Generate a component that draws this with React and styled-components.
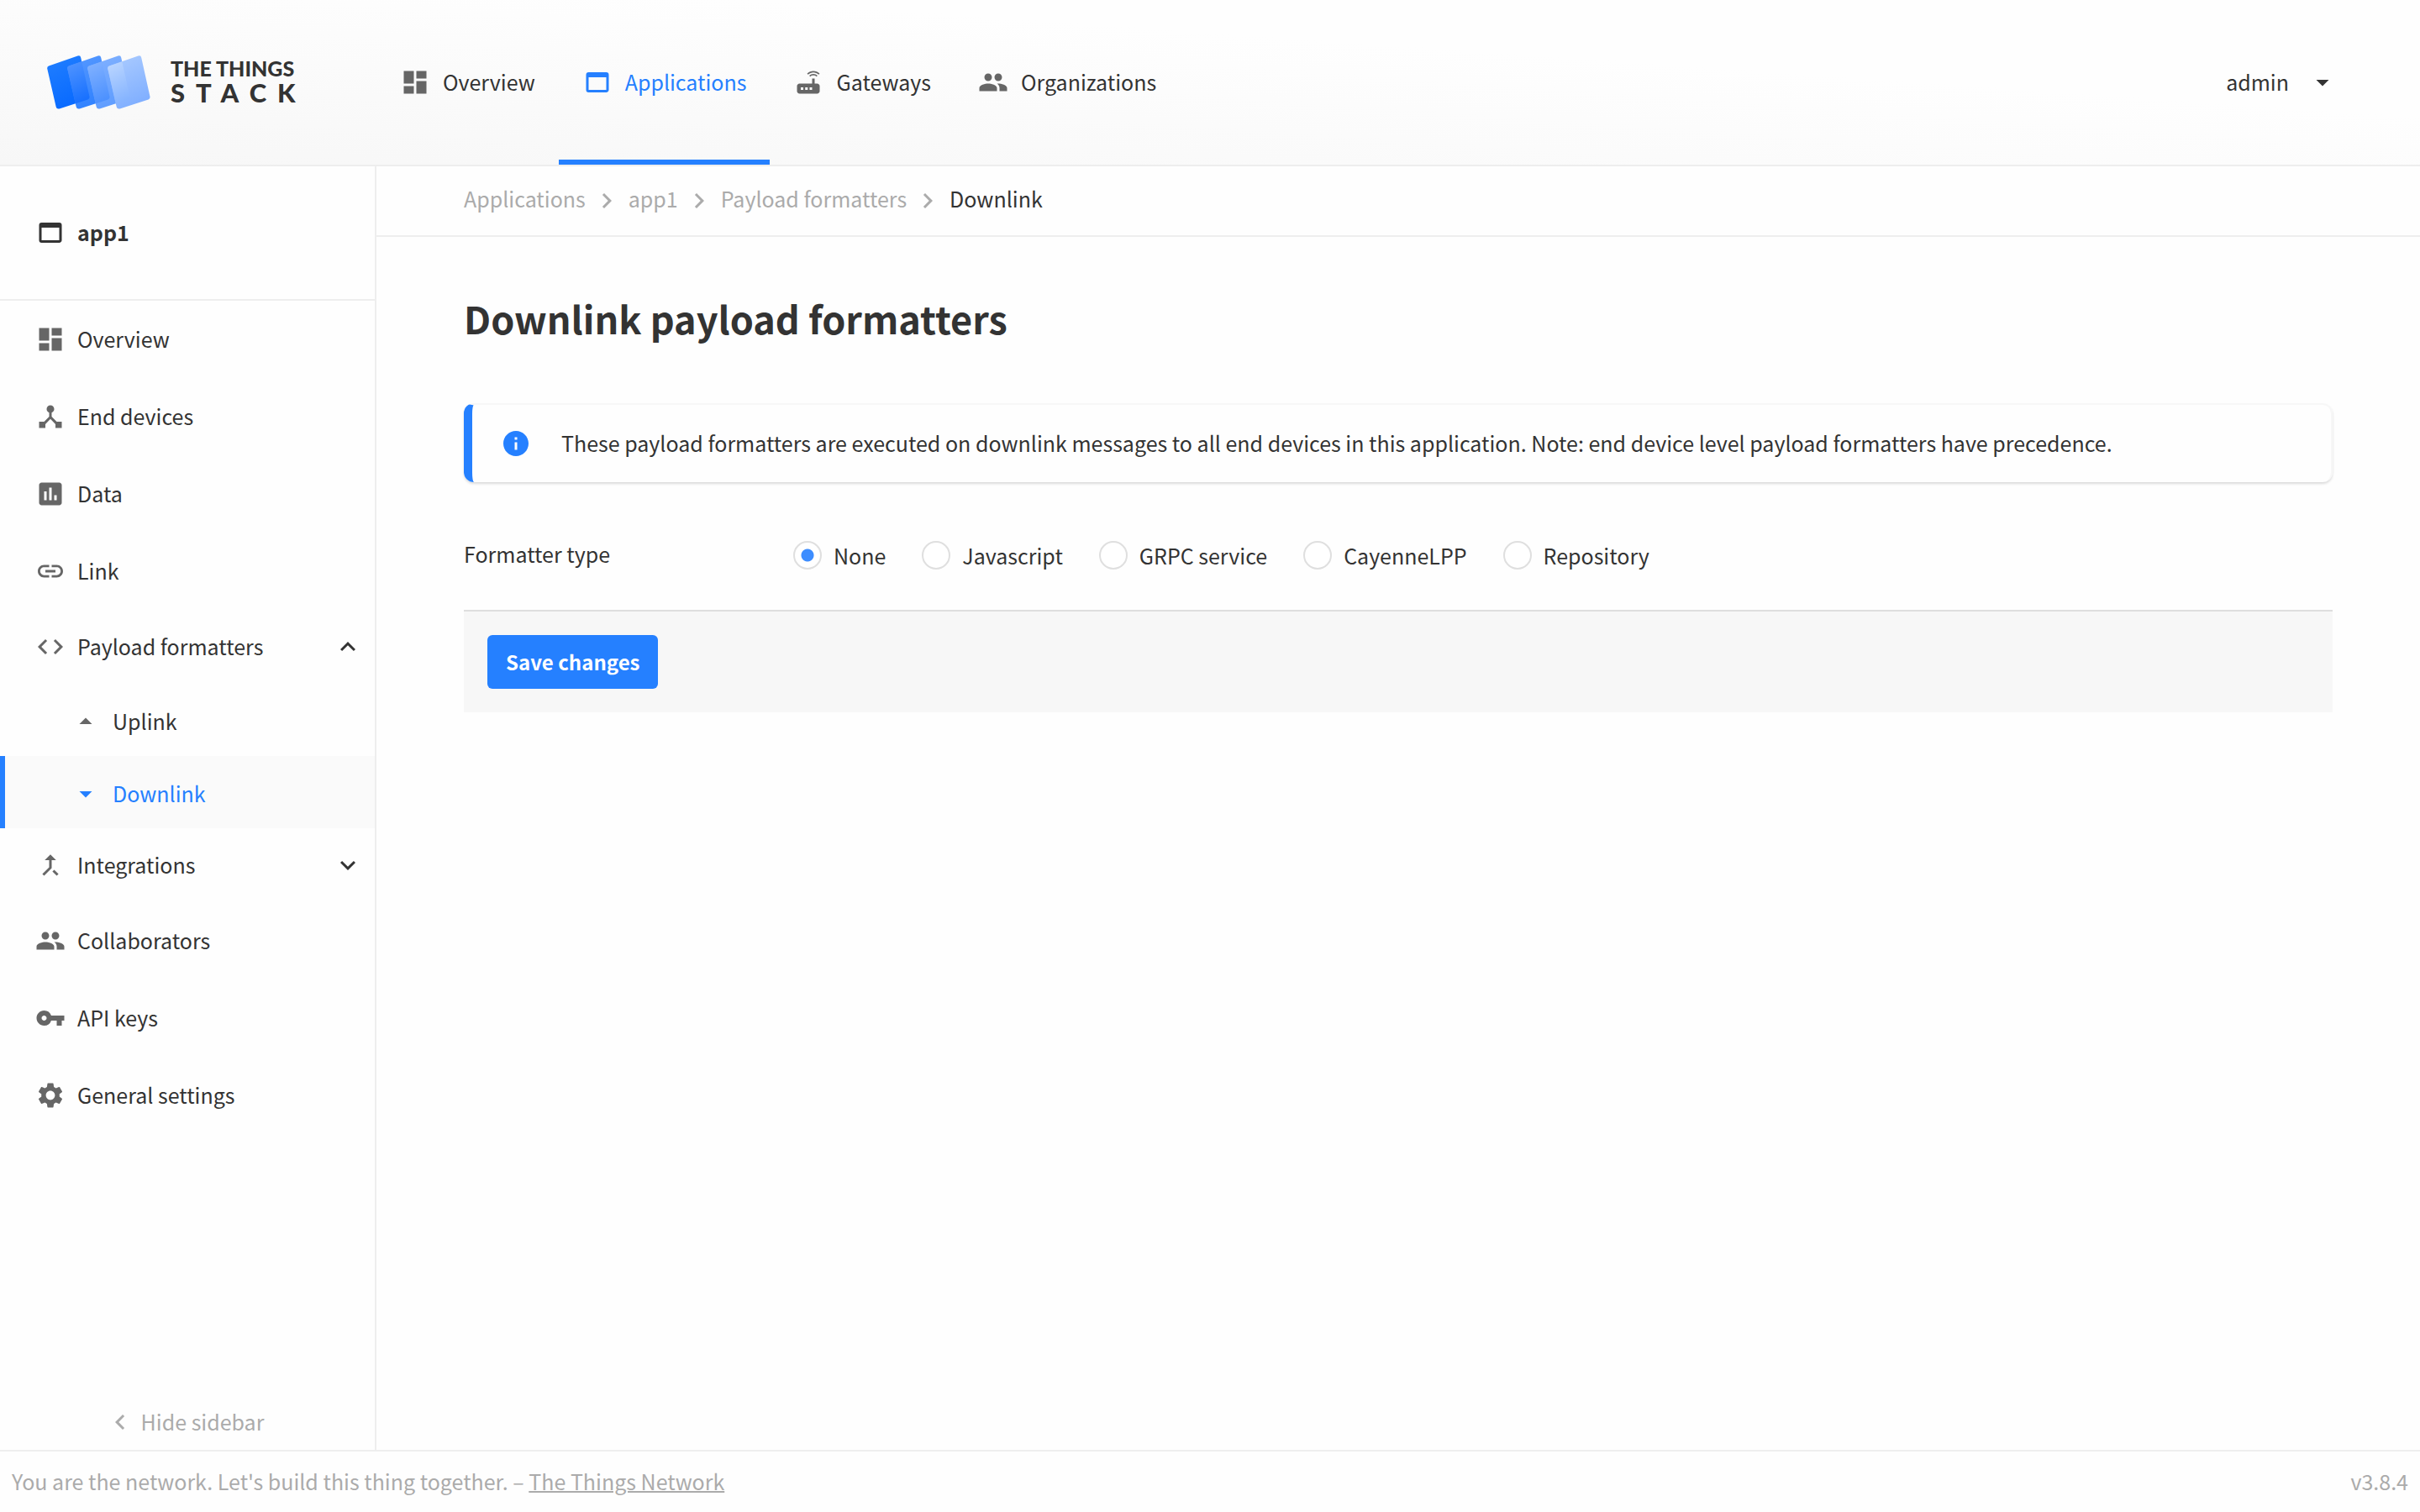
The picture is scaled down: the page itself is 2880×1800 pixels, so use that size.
import React from 'react'
import styled, { createGlobalStyle, css } from 'styled-components'
import {
  MdDashboard, MdWebAsset, MdRouter, MdPeople, MdArrowDropDown, MdArrowDropUp, MdDeviceHub,
  MdPoll, MdLink, MdCode, MdExpandLess, MdExpandMore, MdCallMerge, MdVpnKey, MdSettings,
  MdKeyboardArrowLeft, MdKeyboardArrowRight, MdInfo,
} from 'react-icons/md'

const c = {
  blue: '#2580ff', text: '#333333', icon: '#666666', muted: '#ababab', line: '#eeeeee',
}

const GlobalStyle = createGlobalStyle`
  *, *::before, *::after { box-sizing: border-box; }
  body {
    margin: 0;
    color: ${c.text};
    background: #fefefe;
    font: 400 25px/36px "Noto Sans CJK SC", "Source Sans Pro", sans-serif;
  }
  a { color: inherit; text-decoration: none; }
  button, input { font: inherit; color: inherit; margin: 0; }
  svg { display: block; flex: none; }
  ul, ol { list-style: none; margin: 0; padding: 0; }
`

const Page = styled.div`
  min-height: 100vh;
  display: flex;
  flex-direction: column;
`
const Label = styled.span`
  flex: ${p => (p.$grow ? 1 : 'none')};
  padding-bottom: 2px;
`
const Header = styled.header`
  display: flex;
  height: 198px;
  border-bottom: 2px solid ${c.line};
  background: linear-gradient(4deg, #f7f7f7, #fefefe 65%);
`
const LogoLink = styled.a`
  width: 448px;
  padding-left: 56px;
  display: flex;
  align-items: center;
  gap: 23px;
`
const LogoText = styled.span`
  display: flex;
  flex-direction: column;
  font-family: Lato, sans-serif;
  font-weight: 900;
`
const LogoTop = styled.span`
  font-size: 25px;
  line-height: 24px;
`
const LogoBottom = styled.span`
  font-size: 31px;
  line-height: 34px;
  letter-spacing: 13px;
`
const Nav = styled.nav`
  display: flex;
  flex: 1;
`
const tone = css`
  color: ${p => (p.$active ? c.blue : c.text)};
  svg { color: ${p => (p.$active ? c.blue : c.icon)}; }
`
const Tab = styled.a`
  display: flex;
  align-items: center;
  gap: 15px;
  padding: 6px 28px 0;
  border-bottom: 6px solid ${p => (p.$active ? c.blue : 'transparent')};
  ${tone}
`
const UserButton = styled.button`
  display: flex;
  align-items: center;
  gap: 22px;
  padding: 0;
  margin-right: 98px;
  border: 0;
  background: none;
`
const Body = styled.div`
  flex: 1;
  display: flex;
`
const Sidebar = styled.aside`
  width: 448px;
  flex: none;
  display: flex;
  flex-direction: column;
  border-right: 2px solid ${c.line};
`
const SideTitle = styled.a`
  display: flex;
  align-items: center;
  gap: 14px;
  height: 160px;
  padding-left: 42px;
  border-bottom: 2px solid ${c.line};
  font-weight: 700;
`
const SideList = styled.ul`
  flex: 1;
`
const row = css`
  display: flex;
  align-items: center;
  gap: 14px;
  width: 100%;
`
const SideLink = styled.a`
  ${row}
  height: 92px;
  padding: 0 14px 0 42px;
  ${tone}
`
const SideGroup = styled.button`
  ${row}
  height: 88px;
  padding: 0 14px 0 42px;
  border: 0;
  background: none;
  text-align: left;
  ${tone}
  svg:last-child { color: ${c.text}; }
`
const SubLink = styled.a`
  ${row}
  height: 86px;
  padding: 4px 14px 0 78px;
  border-left: 6px solid ${p => (p.$active ? c.blue : 'transparent')};
  background: ${p => (p.$active ? '#fafafa' : 'none')};
  ${tone}
`
const HideButton = styled.button`
  display: flex;
  align-items: center;
  justify-content: center;
  gap: 7px;
  padding: 14px 7px 14px 0;
  border: 0;
  background: none;
  color: ${c.muted};
`
const Main = styled.main`
  flex: 1;
  min-width: 0;
`
const Crumbs = styled.ol`
  display: flex;
  align-items: center;
  height: 84px;
  padding-left: 104px;
  border-bottom: 2px solid ${c.line};
  color: ${c.muted};
`
const Crumb = styled.li`
  display: flex;
  align-items: center;
  gap: 7px;
  margin-right: 8px;
  color: ${p => (p.$current ? c.text : c.muted)};
`
const CrumbText = styled.span`
  padding-bottom: 6px;
`
const Content = styled.div`
  padding: 62px 104px 0;
`
const Title = styled.h1`
  margin: 0 0 66px;
  font-size: 45px;
  line-height: 70px;
  font-weight: 700;
`
const Notice = styled.div`
  display: flex;
  align-items: center;
  gap: 36px;
  min-height: 94px;
  padding-left: 34px;
  border: 2px solid #f7f7f7;
  border-left: 10px solid ${c.blue};
  border-bottom: 0;
  border-radius: 12px;
  box-shadow: 0 2px 3px rgba(0, 0, 0, 0.14);
  svg { color: ${c.blue}; }
`
const Field = styled.fieldset`
  display: flex;
  align-items: center;
  margin: 0;
  padding: 67px 0 45px;
  border: 0;
`
const FieldName = styled.span`
  width: 392px;
  padding-bottom: 4px;
`
const Options = styled.div`
  display: flex;
  gap: 43px;
`
const Option = styled.label`
  display: flex;
  align-items: center;
  gap: 14px;
`
const Radio = styled.input`
  appearance: none;
  width: 34px;
  height: 34px;
  border: 2px solid #dfdfdf;
  border-radius: 50%;
  background: #ffffff;
  &:checked { background: radial-gradient(circle, #3d8dff 7px, #ffffff 8px); }
`
const SubmitBar = styled.div`
  padding: 28px;
  border-top: 2px solid #dedede;
  background: #f7f7f7;
`
const SubmitButton = styled.button`
  display: block;
  height: 64px;
  padding: 0 22px;
  border: 0;
  border-radius: 6px;
  background: ${c.blue};
  color: #ffffff;
  font-size: 24px;
  font-weight: 700;
`
const Footer = styled.footer`
  display: flex;
  justify-content: space-between;
  align-items: center;
  height: 74px;
  padding: 0 14px;
  border-top: 2px solid ${c.line};
  color: ${c.muted};
  a { text-decoration: underline; text-decoration-thickness: 2px; }
`

const slatPath =
  'M2 12.5 36.5 .6Q39.6-.4 40.2 2.6L50.5 49Q51 51.600 48.600 52.500L14.600 63.400Q11.400 64.300 10.700 61.300L.3 16Q-.3 13.400 2 12.500Z'

// Each slat has its own fill, and a second one where it covers the slat behind it.
const slats = [
  { x: 0, fill: ['#0668ff', '#1f7dff'] },
  { x: 24, fill: ['#2d80ff', '#5598ff'], over: ['#0565ff', '#5295ff'] },
  { x: 48, fill: ['#5c9bff', '#7fb0ff'], over: ['#3a86ff', '#84b3ff'] },
  { x: 72, fill: ['#7dadff', '#a9caff'], over: ['#74a9ff', '#bdd7ff'] },
]

const Fade = ({ id, colors }) => (
  <linearGradient id={id} x1="0.7" y1="1" x2="0.3" y2="0">
    <stop offset="0" stopColor={colors[0]} />
    <stop offset="1" stopColor={colors[1]} />
  </linearGradient>
)

function Logo() {
  return (
    <svg width="124" height="64" viewBox="0 0 124 64" aria-hidden="true">
      <defs>
        <clipPath id="behind"><path transform="translate(-24 0)" d={slatPath} /></clipPath>
        {slats.map(s => <Fade key={s.x} id={`slat${s.x}`} colors={s.fill} />)}
        {slats.slice(1).map(s => <Fade key={s.x} id={`over${s.x}`} colors={s.over} />)}
      </defs>
      {slats.map(s => (
        <g key={s.x} transform={`translate(${s.x} 0)`}>
          <path fill={`url(#slat${s.x})`} d={slatPath} />
          {s.over && <path fill={`url(#over${s.x})`} clipPath="url(#behind)" d={slatPath} />}
        </g>
      ))}
    </svg>
  )
}

const tabs = [
  ['Overview', MdDashboard], ['Applications', MdWebAsset, true], ['Gateways', MdRouter], ['Organizations', MdPeople],
]
const linksTop = [['Overview', MdDashboard], ['End devices', MdDeviceHub], ['Data', MdPoll], ['Link', MdLink]]
const linksBottom = [['Collaborators', MdPeople], ['API keys', MdVpnKey], ['General settings', MdSettings]]
const options = ['None', 'Javascript', 'GRPC service', 'CayenneLPP', 'Repository']

const sideLinks = list => list.map(([name, Icon]) => (
  <li key={name}><SideLink href="#"><Icon size={36} /><Label>{name}</Label></SideLink></li>
))

export default function App() {
  return (
    <Page>
      <GlobalStyle />
      <Header>
        <LogoLink href="#">
          <Logo />
          <LogoText>
            <LogoTop>THE THINGS</LogoTop>
            <LogoBottom>STACK</LogoBottom>
          </LogoText>
        </LogoLink>
        <Nav>
          {tabs.map(([name, Icon, active]) => (
            <Tab key={name} href="#" $active={active}><Icon size={36} /><Label>{name}</Label></Tab>
          ))}
        </Nav>
        <UserButton type="button"><Label>admin</Label><MdArrowDropDown size={36} /></UserButton>
      </Header>
      <Body>
        <Sidebar>
          <SideTitle href="#"><MdWebAsset size={36} /><Label>app1</Label></SideTitle>
          <SideList>
            {sideLinks(linksTop)}
            <li>
              <SideGroup type="button">
                <MdCode size={36} /><Label $grow>Payload formatters</Label><MdExpandLess size={36} />
              </SideGroup>
              <ul>
                <li><SubLink href="#"><MdArrowDropUp size={36} /><Label>Uplink</Label></SubLink></li>
                <li><SubLink href="#" $active><MdArrowDropDown size={36} /><Label>Downlink</Label></SubLink></li>
              </ul>
            </li>
            <li>
              <SideGroup type="button">
                <MdCallMerge size={36} /><Label $grow>Integrations</Label><MdExpandMore size={36} />
              </SideGroup>
            </li>
            {sideLinks(linksBottom)}
          </SideList>
          <HideButton type="button"><MdKeyboardArrowLeft size={36} /><Label>Hide sidebar</Label></HideButton>
        </Sidebar>
        <Main>
          <Crumbs>
            {['Applications', 'app1', 'Payload formatters'].map(name => (
              <Crumb key={name}>
                <CrumbText as="a" href="#">{name}</CrumbText>
                <MdKeyboardArrowRight size={36} />
              </Crumb>
            ))}
            <Crumb $current><CrumbText>Downlink</CrumbText></Crumb>
          </Crumbs>
          <Content>
            <Title>Downlink payload formatters</Title>
            <Notice>
              <MdInfo size={36} />
              <Label $grow>These payload formatters are executed on downlink messages to all end devices in this application. Note: end device level payload formatters have precedence.</Label>
            </Notice>
            <form onSubmit={e => e.preventDefault()}>
              <Field aria-labelledby="formatter-type">
                <FieldName id="formatter-type">Formatter type</FieldName>
                <Options>
                  {options.map((name, i) => (
                    <Option key={name}>
                      <Radio type="radio" name="formatter" defaultChecked={i === 0} />
                      {name}
                    </Option>
                  ))}
                </Options>
              </Field>
              <SubmitBar><SubmitButton type="submit">Save changes</SubmitButton></SubmitBar>
            </form>
          </Content>
        </Main>
      </Body>
      <Footer>
        <Label>You are the network. Let's build this thing together. – <a href="#">The Things Network</a></Label>
        <Label>v3.8.4</Label>
      </Footer>
    </Page>
  )
}
